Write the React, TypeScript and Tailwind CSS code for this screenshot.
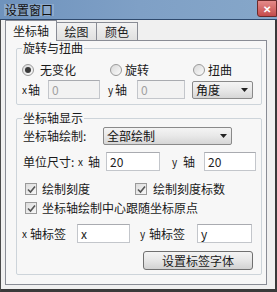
import React from "react"

const Radio = ({ checked }: { checked?: boolean }) => (
    <span className="w-[12px] h-[12px] shrink-0 rounded-full border border-[#9a9a9a] bg-linear-to-br from-[#d9d9d9] to-[#fbfbfb] flex items-center justify-center">
        {checked && <span className="w-[6px] h-[6px] rounded-full bg-[#3a3a3a]" />}
    </span>
)

const Check = () => (
    <span className="w-[12px] h-[12px] shrink-0 border border-[#9a9a9a] bg-linear-to-br from-[#dcdcdc] to-[#f8f8f8] flex items-center justify-center">
        <svg width="9" height="9" viewBox="0 0 9 9">
            <path d="M1 4.5 L3.5 7 L8 1.5" stroke="#555" strokeWidth="1.6" fill="none" />
        </svg>
    </span>
)

const Select = ({ label, w }: { label: string; w: string }) => (
    <div className={`${w} h-[18px] border border-[#8a8a8a] rounded-[2px] bg-linear-to-b from-[#f4f4f4] via-[#e8e8e8] to-[#d6d6d6] flex items-center pl-[3px] pr-[4px]`}>
        <span className="grow text-[#111]">{label}</span>
        <svg width="7" height="4" viewBox="0 0 7 4">
            <path d="M0 0 H7 L3.5 4 Z" fill="#222" />
        </svg>
    </div>
)

const Input = ({ value, w, disabled }: { value: string; w: string; disabled?: boolean }) => (
    <div
        className={`${w} h-[19px] border border-[#c3c6cb] border-t-[#a9abb0] flex items-center pl-[3px] ${
            disabled ? "bg-[#f2f2f2] text-[#a0a0a0]" : "bg-white text-[#222]"
        }`}
    >
        {value}
    </div>
)

export default function App() {
    return (
        <div className="w-[277px] h-[292px] flex flex-col bg-[#f0f0f0] text-[12px] leading-none font-['Noto_Sans_CJK_SC','SimSun',sans-serif] text-[#1a1a1a] overflow-hidden">
            {/* title bar */}
            <div className="h-[20px] shrink-0 flex items-start bg-linear-to-r from-[#6f93bd] via-[#7fa0c6] to-[#86a7c9] border-b border-[#2f4a6e]">
                <span className="ml-[4px] mt-[4px] text-[#111] bg-[#9db6d2]/60 px-[1px]">设置窗口</span>
                <span className="ml-auto w-[20px] h-[17px] bg-linear-to-b from-[#e48a8a] to-[#c44b4b] border border-[#6b2b2b] rounded-bl-[3px] flex items-center justify-center text-white text-[10px] font-bold">
                    ✕
                </span>
            </div>

            {/* body */}
            <div className="flex-1 flex flex-col border-l border-r-[2px] border-b-[3px] border-l-[#4a4a4a] border-r-[#3a3a3a] border-b-[#3a3a3a] pl-[4px] pr-[8px] pb-[4px]">
                {/* tabs */}
                <div className="h-[20px] flex items-end shrink-0">
                    <div className="w-[52px] h-[21px] border border-b-0 border-[#898c95] bg-[#f7f7f7] flex items-center justify-center relative z-10 -mb-[1px]">
                        坐标轴
                    </div>
                    <div className="w-[40px] h-[18px] border border-l-0 border-b-0 border-[#898c95] bg-linear-to-b from-[#f2f2f2] to-[#e0e0e0] flex items-center justify-center">
                        绘图
                    </div>
                    <div className="w-[41px] h-[18px] border border-l-0 border-b-0 border-[#898c95] bg-linear-to-b from-[#f2f2f2] to-[#e0e0e0] flex items-center justify-center">
                        颜色
                    </div>
                </div>

                {/* tab panel */}
                <div className="flex-1 border border-[#898c95] bg-[#f7f7f7] pl-[10px] pr-[4px] pt-[1px]">
                    <fieldset className="border border-[#cdd4da] rounded-[2px] px-0 pb-[5px]">
                        <legend className="ml-[5px] px-[1px] leading-[12px]">旋转与扭曲</legend>
                        <div className="mt-[9px] h-[14px] flex items-center pl-[5px]">
                            <div className="w-[88px] flex items-center gap-[6px]">
                                <Radio checked />
                                <span>无变化</span>
                            </div>
                            <div className="w-[83px] flex items-center gap-[3px]">
                                <Radio />
                                <span>旋转</span>
                            </div>
                            <div className="flex items-center gap-[3px]">
                                <Radio />
                                <span>扭曲</span>
                            </div>
                        </div>
                        <div className="mt-[3px] h-[19px] flex items-center pl-[5px]">
                            <span className="text-[10px] w-[6px]">x</span>
                            <span className="w-[20px]">轴</span>
                            <Input value="0" w="w-[52px]" disabled />
                            <span className="ml-[8px] text-[10px] w-[7px]">y</span>
                            <span className="w-[22px]">轴</span>
                            <Input value="0" w="w-[48px]" disabled />
                            <div className="ml-[7px]">
                                <Select label="角度" w="w-[61px]" />
                            </div>
                        </div>
                    </fieldset>

                    <fieldset className="mt-[7px] border border-[#cdd4da] rounded-[2px] px-0 pb-[4px]">
                        <legend className="ml-[5px] px-[1px] leading-[12px]">坐标轴显示</legend>
                        <div className="mt-[3px] h-[18px] flex items-center pl-[6px]">
                            <span className="w-[80px]">坐标轴绘制:</span>
                            <Select label="全部绘制" w="w-[129px]" />
                        </div>
                        <div className="mt-[7px] h-[19px] flex items-center pl-[6px]">
                            <span className="w-[55px]">单位尺寸:</span>
                            <span className="text-[10px] w-[10px]">x</span>
                            <span className="w-[18px]">轴</span>
                            <Input value="20" w="w-[54px]" />
                            <span className="ml-[12px] text-[10px] w-[11px]">y</span>
                            <span className="w-[21px]">轴</span>
                            <Input value="20" w="w-[52px]" />
                        </div>
                        <div className="mt-[11px] h-[14px] flex items-center pl-[8px]">
                            <div className="w-[110px] flex items-center gap-[5px]">
                                <Check />
                                <span>绘制刻度</span>
                            </div>
                            <div className="flex items-center gap-[6px]">
                                <Check />
                                <span>绘制刻度标数</span>
                            </div>
                        </div>
                        <div className="mt-[5px] h-[14px] flex items-center pl-[8px] gap-[5px]">
                            <Check />
                            <span>坐标轴绘制中心跟随坐标原点</span>
                        </div>
                        <div className="mt-[9px] h-[19px] flex items-center pl-[5px]">
                            <span className="text-[10px] w-[8px]">x</span>
                            <span className="w-[47px]">轴标签</span>
                            <Input value="x" w="w-[53px]" />
                            <span className="ml-[10px] text-[10px] w-[9px]">y</span>
                            <span className="w-[48px]">轴标签</span>
                            <Input value="y" w="w-[55px]" />
                        </div>
                        <div className="mt-[8px] flex pl-[126px]">
                            <div className="w-[110px] h-[19px] border border-[#707070] rounded-[3px] bg-linear-to-b from-[#f4f4f4] via-[#e6e6e6] to-[#d2d2d2] flex items-center justify-center">
                                设置标签字体
                            </div>
                        </div>
                    </fieldset>
                </div>
            </div>
        </div>
    )
}
